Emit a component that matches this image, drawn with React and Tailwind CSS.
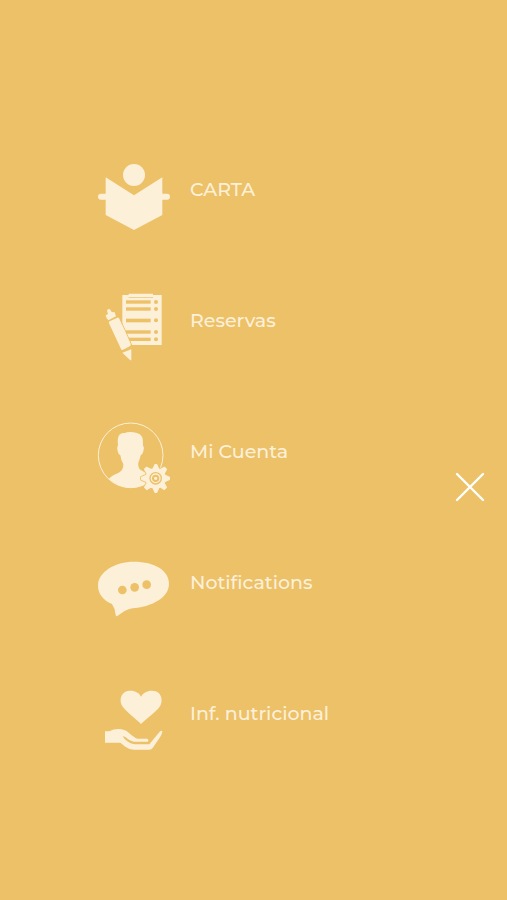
import React from 'react'

function BookIcon() {
  return (
    <svg viewBox="0 -30 270 273" className="w-[90px] h-[91px] shrink-0" fill="currentColor" aria-hidden="true">
      <circle cx="132" cy="60" r="33" />
      <path d="M47 67 L132 121 L217 67 V116 H231 a9 9 0 0 1 0 18 H217 V180 L132 225 L47 180 V134 H33 a9 9 0 0 1 0 -18 H47 Z" />
    </svg>
  )
}

function ChecklistIcon() {
  return (
    <svg viewBox="0 -27 270 273" className="w-[90px] h-[91px] shrink-0" fill="currentColor" aria-hidden="true">
      <path d="M97 30 H116 V26 H189 V30 H215 V180 H123 L97 126 Z" />
      <g className="text-[#ecc168]" fill="currentColor">
        <rect x="116" y="36" width="73" height="2" />
        <rect x="108" y="46" width="74" height="10" />
        <rect x="108" y="67" width="74" height="10" />
        <rect x="108" y="101" width="74" height="11" />
        <rect x="108" y="136" width="74" height="10" />
        <rect x="116" y="158" width="66" height="10" />
        <circle cx="198" cy="51" r="6" />
        <circle cx="198" cy="72" r="6" />
        <circle cx="198" cy="106" r="6" />
        <circle cx="198" cy="141" r="6" />
        <circle cx="198" cy="163" r="6" />
      </g>
      <path className="text-[#ecc168]" fill="none" stroke="currentColor" strokeWidth="3" d="M90 102 L125 180" />
      <path d="M57 115 Q55 111 59 109 L82 98 Q86 97 88 101 L122 177 Q123 182 119 184 L99 194 Q95 196 93 192 Z" />
      <path d="M47 91 L54 87 L51 77 Q53 70 60 73 L65 81 L74 82 L78 94 L55 106 Q48 99 47 91 Z" />
      <path d="M97 203 L124 193 V224 Q123 227 120 225 Z" />
    </svg>
  )
}

const gearPath =
  'M189 162 L195 149 H200 L206 162 L211 164 L223 157 L229 163 L222 176 L225 181 L238 187 V193 L225 199 L222 204 L229 217 L223 223 L211 216 L206 218 L200 232 H195 L189 218 L183 216 L170 223 L164 217 L172 204 L169 199 L155 193 V187 L169 181 L172 176 L164 163 L170 157 L183 164 Z'

function AccountIcon() {
  return (
    <svg viewBox="0 -24 270 273" className="w-[90px] h-[91px] shrink-0" fill="currentColor" aria-hidden="true">
      <circle cx="122" cy="121" r="97" fill="none" stroke="currentColor" strokeWidth="3" />
      <path d="M84 90 Q79 52 104 54 Q118 48 141 54 Q161 57 159 91 Q164 98 160 109 Q158 119 152 121 Q149 135 145 143 Q143 157 152 165 L168 174 V207 A97 97 0 0 1 57 192 Q65 182 83 175 Q101 167 100 148 Q93 137 91 121 Q85 119 83 109 Q80 97 84 90 Z" />
      <path className="text-[#ecc168]" stroke="currentColor" strokeWidth="9" strokeLinejoin="round" d={gearPath} />
      <path stroke="currentColor" strokeWidth="4" strokeLinejoin="round" d={gearPath} />
      <g className="text-[#ecc168]" fill="none" stroke="currentColor">
        <circle cx="197" cy="190" r="17" strokeWidth="4" />
        <circle cx="197" cy="190" r="8" strokeWidth="6" />
      </g>
    </svg>
  )
}

function ChatIcon() {
  return (
    <svg viewBox="0 -36 270 273" className="w-[90px] h-[91px] shrink-0" fill="currentColor" aria-hidden="true">
      <path d="M24 105 C25 66 74 35 132 35 C194 35 237 61 237 101 C237 144 184 170 127 175 C108 179 96 188 81 199 Q77 199 77 194 Q76 177 66 162 C39 151 23 130 24 105 Z" />
      <g className="text-[#ecc168]" fill="currentColor">
        <circle cx="97" cy="120" r="13" />
        <circle cx="134" cy="112" r="13" />
        <circle cx="170" cy="104" r="13" />
      </g>
    </svg>
  )
}

function HandHeartIcon() {
  return (
    <svg viewBox="0 -33 270 273" className="w-[90px] h-[91px] shrink-0" fill="currentColor" aria-hidden="true">
      <path d="M153 132 C136 116 110 96 97 79 C87 63 91 39 112 33 C131 29 147 37 153 50 C160 36 179 28 197 34 C216 41 219 64 210 79 C199 96 171 115 153 132 Z" />
      <path d="M45 154 H58 Q70 147 86 147 Q104 147 116 158 Q132 172 142 176 H172 Q178 180 173 185 H131 Q116 181 106 171 L98 168 Q102 178 114 185 Q124 192 134 193 H178 L209 155 Q215 150 217 155 Q216 163 211 170 L188 204 Q185 209 178 209 H131 Q117 208 106 200 L91 188 H45 Z" />
    </svg>
  )
}

const menuItems = [
  { label: 'CARTA', href: '#carta', Icon: BookIcon },
  { label: 'Reservas', href: '#reservas', Icon: ChecklistIcon },
  { label: 'Mi Cuenta', href: '#mi-cuenta', Icon: AccountIcon },
  { label: 'Notifications', href: '#notifications', Icon: ChatIcon },
  { label: 'Inf. nutricional', href: '#inf-nutricional', Icon: HandHeartIcon },
]

export default function App() {
  return (
    <div className="relative flex min-h-screen flex-col justify-center bg-[#ecc168] pt-[5px] text-[#fdf0d8] font-[Montserrat,Inter,sans-serif]">
      <nav aria-label="Menu">
        <ul className="flex flex-col pl-[90px] pr-16">
          {menuItems.map(({ label, href, Icon }) => (
            <li key={label}>
              <a href={href} className="flex h-[131px] items-center gap-[10px] text-[19px] leading-6 font-medium">
                <Icon />
                <span className="pb-px">{label}</span>
              </a>
            </li>
          ))}
        </ul>
      </nav>

      <button type="button" aria-label="Close menu" className="absolute right-[21px] top-[471px] size-8 cursor-pointer text-white">
        <svg viewBox="0 0 32 32" className="size-8" fill="none" stroke="currentColor" strokeWidth="2.4" strokeLinecap="round">
          <path d="M3 3 L29 29 M29 3 L3 29" />
        </svg>
      </button>
    </div>
  )
}
